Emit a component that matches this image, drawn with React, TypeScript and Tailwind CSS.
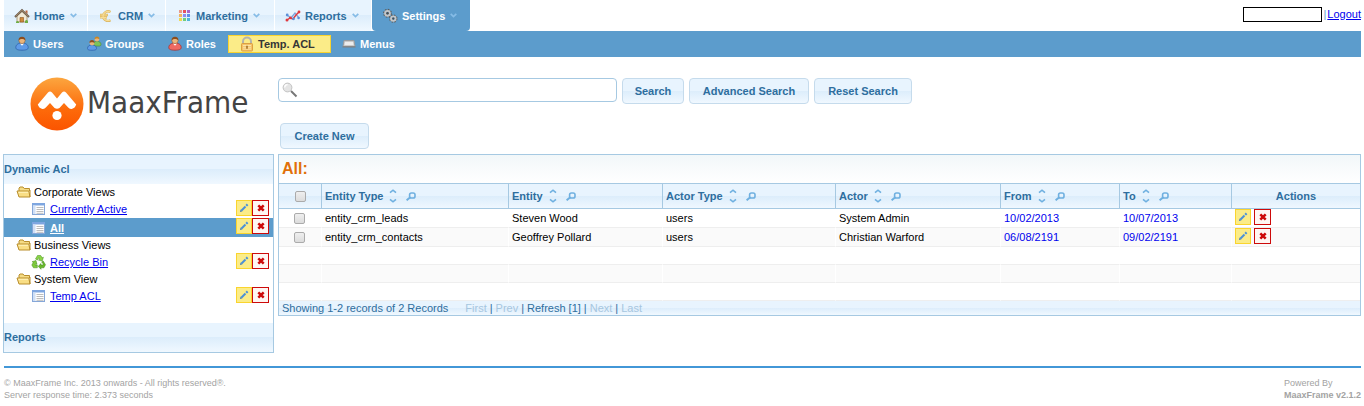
import type { ReactNode } from "react";

const GLOSS = "bg-[linear-gradient(#e8f4fe_0%,#e8f4fe_48%,#dcedfb_50%,#f0f8ff_100%)]";

function ChevronDown() {
  return (
    <svg width="7" height="5" viewBox="0 0 7 5" fill="none" stroke="#86bce6" strokeWidth="1.7" aria-hidden="true">
      <path d="M0.7 0.8 3.5 3.6 6.3 0.8" />
    </svg>
  );
}

function HomeIcon() {
  return (
    <svg width="16" height="16" viewBox="0 0 16 16" aria-hidden="true">
      <path d="M3 8 8 3.5 13 8v6H3z" fill="#f1ead8" stroke="#a08a66" strokeWidth=".8" />
      <path d="M1 9 8 2.2 15 9" fill="none" stroke="#6b5b4b" strokeWidth="2" />
      <path d="M1.6 8.4 8 2.2l6.4 6.2" fill="none" stroke="#b99a73" strokeWidth=".7" />
      <path d="M11.5 2.5h2v3.6l-2-2z" fill="#b8643c" />
      <path d="M6 14V9.5h3.5V14z" fill="#d08a3a" stroke="#8a5524" strokeWidth=".6" />
      <path d="M2 14.5c0-2 2-2 3-.8V15H2zM11 13c1-1.5 3-1 3 .8V15h-3z" fill="#6fae45" />
    </svg>
  );
}

function EuroIcon() {
  return (
    <svg width="16" height="16" viewBox="0 0 16 16" fill="none" aria-hidden="true">
      <path d="M12.5 4A5 5 0 0 0 5 8a5 5 0 0 0 7.5 4.2M2 7h8M2 9.4h7" stroke="#dcb661" strokeWidth="2.3" />
      <path d="M12.3 4A5 5 0 0 0 5 8a5 5 0 0 0 7.3 4M2.3 7h7.2M2.3 9.4h6.3" stroke="#f7dd96" strokeWidth="1.1" />
    </svg>
  );
}

function SwatchIcon() {
  const colors = ["#e99a8a", "#e8505b", "#a865c9", "#f3b35f", "#8d8df0", "#5f8de9", "#f0da52", "#6fcf7d", "#4fb6d8"];
  return (
    <svg width="16" height="16" viewBox="0 0 16 16" aria-hidden="true">
      {colors.map((c, i) => (
        <rect key={c} x={3 + (i % 3) * 4} y={2 + Math.floor(i / 3) * 4} width="3" height="3" fill={c} />
      ))}
    </svg>
  );
}

function ChartIcon() {
  return (
    <svg width="16" height="16" viewBox="0 0 16 16" fill="none" aria-hidden="true">
      <path d="M2 7l4 3 4-5 4 5" stroke="#7ba7e0" strokeWidth="1.3" />
      <path d="M2 12l3-2 3 1 3-4 3-3" stroke="#e0393e" strokeWidth="1.4" />
      <g fill="#e0393e">
        <circle cx="2" cy="12" r="1.5" /><circle cx="5.3" cy="9.8" r="1.4" /><circle cx="14" cy="4" r="1.4" />
      </g>
      <g fill="#5b8fd8">
        <circle cx="2.2" cy="7" r="1.4" /><circle cx="8.5" cy="10.8" r="1.4" /><circle cx="13.6" cy="10" r="1.3" />
      </g>
    </svg>
  );
}

function GearsIcon() {
  return (
    <svg width="16" height="16" viewBox="0 0 16 16" fill="none" aria-hidden="true">
      <circle cx="5.5" cy="5.3" r="3.6" stroke="#5d5d5d" strokeWidth="1.7" strokeDasharray="1.6 1.2" />
      <circle cx="5.5" cy="5.3" r="2.4" stroke="#c6c6c6" strokeWidth="1.9" />
      <circle cx="5.5" cy="5.3" r="1.2" fill="#4c4c4c" />
      <circle cx="11.3" cy="10.6" r="3.4" stroke="#5d5d5d" strokeWidth="1.6" strokeDasharray="1.5 1.2" />
      <circle cx="11.3" cy="10.6" r="2.3" stroke="#c6c6c6" strokeWidth="1.8" />
      <circle cx="11.3" cy="10.6" r="1.1" fill="#4c4c4c" />
    </svg>
  );
}

function PersonIcon({ color, edge }: { color: string; edge: string }) {
  return (
    <svg width="16" height="16" viewBox="0 0 16 16" aria-hidden="true">
      <path d="M1.8 11.6c0-3 2.6-4.6 6.200-4.600s6.200 1.600 6.200 4.600c0 2-2.600 2.600-6.200 2.600S1.800 13.600 1.800 11.600z" fill={color} stroke={edge} strokeWidth=".8" />
      <path d="M6 7.500l2 2.200 2-2.200z" fill="#fff" />
      <circle cx="8" cy="4.500" r="3.100" fill="#eab57c" stroke="#8a5524" strokeWidth=".5" />
      <path d="M4.700 4.500C4.300 2 6 .8 8 .8S11.700 2 11.300 4.500C10.500 3.300 9 3.100 8 3.100S5.500 3.300 4.700 4.500z" fill="#8b4d1e" />
    </svg>
  );
}

function GroupIcon() {
  return (
    <svg width="16" height="16" viewBox="0 0 16 16" aria-hidden="true">
      <path d="M7 8.500c0-2 1.500-3.200 4-3.200s4 1.200 4 3.200-2 1.500-4 1.500S7 10.500 7 8.500z" fill="#7cc35a" stroke="#4a8a33" strokeWidth=".6" />
      <circle cx="11" cy="3.300" r="2.200" fill="#eab57c" />
      <path d="M8.700 3.300C8.400 1.500 9.700.5 11 .5s2.700 1 2.300 2.800C12.500 2.300 9.500 2.300 8.700 3.300z" fill="#c98522" />
      <path d="M1.500 12.500c0-2.300 1.800-3.600 4.500-3.600s4.500 1.300 4.500 3.600c0 1.500-2 1.800-4.500 1.800S1.500 14 1.500 12.500z" fill="#5e9be8" stroke="#2d5fa8" strokeWidth=".7" />
      <circle cx="6" cy="7" r="2.400" fill="#eab57c" />
      <path d="M3.500 7C3.200 5.200 4.500 4 6 4s2.800 1.200 2.500 3C7.700 5.900 4.300 5.900 3.500 7z" fill="#8b4d1e" />
    </svg>
  );
}

function LockIcon() {
  return (
    <svg width="16" height="16" viewBox="0 0 16 16" aria-hidden="true">
      <path d="M4 8V5.500a4 4 0 0 1 8 0V8" fill="none" stroke="#b4b4ac" strokeWidth="2" />
      <rect x="2.500" y="7.500" width="11" height="7.500" rx=".8" fill="#f6c466" stroke="#d99a3c" strokeWidth=".9" />
      <path d="M4 9.500h8M4 11.300h8M4 13.100h8" stroke="#fdebb8" strokeWidth=".8" />
      <path d="M7.300 9.800h1.400v3H7.300z" fill="#9a6418" />
    </svg>
  );
}

function MenuIcon() {
  return (
    <svg width="16" height="16" viewBox="0 0 16 16" aria-hidden="true">
      <path d="M3 4.500h10l1 6H2z" fill="#c9c9c9" stroke="#9a9a9a" strokeWidth=".9" />
      <path d="M4 6h8l.5 3h-9z" fill="#ededed" />
      <path d="M1.500 10.900h13" stroke="#7f7f7f" strokeWidth="1.200" />
    </svg>
  );
}

function FolderIcon() {
  return (
    <svg width="16" height="16" viewBox="0 0 16 16" aria-hidden="true">
      <path d="M3 12V4l1-1h3l1.200 1.500H13.500V7" fill="#f5dc86" stroke="#b98e2d" />
      <path d="M1 7h11.800l1.200 6H3z" fill="#f9de85" stroke="#b98e2d" />
      <path d="M2.500 8.300h9.700" stroke="#fff3bd" />
      <path d="M14 6v7" stroke="#b98e2d" />
    </svg>
  );
}

function ListIcon() {
  return (
    <svg width="16" height="16" viewBox="0 0 16 16" aria-hidden="true">
      <rect x="1.500" y="2.500" width="12" height="11" fill="#fff" stroke="#86a7d8" />
      <path d="M1 2h13v2.500H1z" fill="#7ea6e0" />
      <path d="M2 4.500h2.500V13H2z" fill="#cfdff5" />
      <path d="M5.500 6.500h7M5.500 8.500h7M5.500 10.500h7M5.500 12.300h7" stroke="#b4b4b4" strokeWidth=".9" />
    </svg>
  );
}

function RecycleIcon() {
  return (
    <svg width="16" height="16" viewBox="0 0 16 16" aria-hidden="true">
      <g stroke="#3e8a17" strokeWidth=".5">
        <path d="M4.500 5 6.500 1.500h3.200l1.500 2.300 1.200-.6-1.200 3.900-3.700-1 1.200-.7L7.800 3.600 6.500 6z" fill="#8ed648" />
        <path d="M12.200 7l2.300 3.800-1.600 3H10v1.500L7.200 12.300 10 9.500V11h1.800l.5-.9L10.700 8z" fill="#69b82c" />
        <path d="M6.300 13.800H2.500L.8 11l1.500-2.600-1.200-.7L5 6.500l1 3.900-1.200-.7L4 11h2.300z" fill="#7fcb3b" />
      </g>
    </svg>
  );
}

function PencilIcon() {
  return (
    <svg width="10" height="10" viewBox="0 0 10 10" aria-hidden="true">
      <path d="M1 9l.7-2.400L3.400 8.300z" fill="#2f6fb5" />
      <path d="M2.500 7.500 6.500 3.500" stroke="#4a90d9" strokeWidth="2" />
      <path d="M7.200 2.800 8.600 1.400" stroke="#4a90d9" strokeWidth="2.200" />
    </svg>
  );
}

function CrossIcon() {
  return (
    <svg width="8" height="8" viewBox="0 0 8 8" aria-hidden="true">
      <path d="M1.300 1.300l5.400 5.400M6.700 1.300 1.300 6.700" stroke="#cd0a0a" strokeWidth="2.500" />
    </svg>
  );
}

function MagnifierIcon() {
  return (
    <svg width="16" height="16" viewBox="0 0 16 16" aria-hidden="true">
      <path d="M9 9l5.500 5.500" stroke="#777" strokeWidth="1.900" />
      <circle cx="5.500" cy="5.500" r="4.400" fill="#e4e4e4" stroke="#c2c2c2" strokeWidth="1" />
      <path d="M2.700 5.500a2.900 2.900 0 0 1 2.900-2.800" stroke="#fff" strokeWidth="1.300" fill="none" />
    </svg>
  );
}

function SortIcon() {
  return (
    <svg width="8" height="14" viewBox="0 0 8 14" fill="none" stroke="#6fb0e0" strokeWidth="1.600" aria-hidden="true">
      <path d="M1 3.700 4 1.200 7 3.700M1 10.300 4 12.800 7 10.300" />
    </svg>
  );
}

function FilterIcon() {
  return (
    <svg width="10" height="9" viewBox="0 0 10 9" fill="none" stroke="#6fb0e0" strokeWidth="1.600" aria-hidden="true">
      <rect x="3.600" y="1" width="5.400" height="5" rx="1.800" />
      <path d="M4.300 5.200.6 8.200" strokeWidth="2" />
    </svg>
  );
}

function LogoMark() {
  return (
    <svg width="54" height="54" viewBox="0 0 54 54" role="img" aria-label="MaaxFrame">
      <defs>
        <linearGradient id="mark" x1="0" y1="0" x2="0" y2="1">
          <stop offset="0" stopColor="#fca63f" />
          <stop offset=".6" stopColor="#fd6a0a" />
          <stop offset="1" stopColor="#fb5400" />
        </linearGradient>
      </defs>
      <circle cx="27" cy="27" r="26.500" fill="url(#mark)" />
      <path
        d="M7.800 27.500 18 15.500q2-2 4 0l5 6 5-6q2-2 4 0l10.200 12q-1 3.500-4.500 4.500-2 0-3.500-1.500l-4.200-4.500-4.500 5q-2.500 1.500-5 0l-4.500-5-4.200 4.500q-1.500 1.500-3.500 1.500-3.500-1-4.500-4.500z"
        fill="#fff"
      />
      <circle cx="27" cy="38.500" r="4.600" fill="#fff" />
    </svg>
  );
}

const tabs: { label: string; icon: ReactNode; width: string; active?: boolean }[] = [
  { label: "Home", icon: <HomeIcon />, width: "w-[84px]" },
  { label: "CRM", icon: <EuroIcon />, width: "w-[78px]" },
  { label: "Marketing", icon: <SwatchIcon />, width: "w-[109px]" },
  { label: "Reports", icon: <ChartIcon />, width: "w-[97px]" },
  { label: "Settings", icon: <GearsIcon />, width: "w-[98px]", active: true },
];

const subItems: { label: string; icon: ReactNode; width: string; active?: boolean }[] = [
  { label: "Users", icon: <PersonIcon color="#5e9be8" edge="#2d5fa8" />, width: "w-[72px]" },
  { label: "Groups", icon: <GroupIcon />, width: "w-[81px]" },
  { label: "Roles", icon: <PersonIcon color="#ee6a62" edge="#a83030" />, width: "w-[71px]" },
  { label: "Temp. ACL", icon: <LockIcon />, width: "w-[103px]", active: true },
  { label: "Menus", icon: <MenuIcon />, width: "w-[80px]" },
];

const views: { group: string; items: { label: string; icon: ReactNode; selected?: boolean }[] }[] = [
  {
    group: "Corporate Views",
    items: [
      { label: "Currently Active", icon: <ListIcon /> },
      { label: "All", icon: <ListIcon />, selected: true },
    ],
  },
  { group: "Business Views", items: [{ label: "Recycle Bin", icon: <RecycleIcon /> }] },
  { group: "System View", items: [{ label: "Temp ACL", icon: <ListIcon /> }] },
];

const columns = ["Entity Type", "Entity", "Actor Type", "Actor", "From", "To"];

const records = [
  ["entity_crm_leads", "Steven Wood", "users", "System Admin", "10/02/2013", "10/07/2013"],
  ["entity_crm_contacts", "Geoffrey Pollard", "users", "Christian Warford", "06/08/2191", "09/02/2191"],
];

function RowActions({ name, gap }: { name: string; gap: string }) {
  return (
    <div className={`flex ${gap}`}>
      <button type="button" aria-label={`Edit ${name}`} className="flex size-4 items-center justify-center border border-[#fad42e] bg-[#fbec88]">
        <PencilIcon />
      </button>
      <button type="button" aria-label={`Delete ${name}`} className="flex h-4 w-[17px] items-center justify-center border border-[#cd0a0a] bg-[#fef6f3]">
        <CrossIcon />
      </button>
    </div>
  );
}

function GlossButton({ children, width, type = "button" }: { children: ReactNode; width: string; type?: "button" | "submit" }) {
  return (
    <button type={type} className={`${width} ${GLOSS} h-[26px] shrink-0 rounded border border-[#c5dbec] font-bold text-[#2e6e9e]`}>
      {children}
    </button>
  );
}

function Check({ label }: { label: string }) {
  return (
    <input
      type="checkbox"
      aria-label={label}
      className="block size-[11px] appearance-none rounded-xs border border-[#ababab] bg-linear-to-b from-[#efefef] to-[#dcdcdc] checked:bg-[#2e6e9e]"
    />
  );
}

function TopBar() {
  return (
    <header className="pr-[3px] pl-1">
      <div className="flex h-[31px] items-start justify-between">
        <nav className="flex" aria-label="Main">
          {tabs.map((t) => (
            <a
              key={t.label}
              href="#"
              className={`${t.width} flex h-[31px] items-center pl-2.5 font-bold whitespace-nowrap ${
                t.active ? "rounded-b bg-[#5c9ccc] text-white" : `border-r border-white text-[#2e6e9e] ${GLOSS}`
              }`}
            >
              {t.icon}
              <span className="mr-[5px] ml-1">{t.label}</span>
              <ChevronDown />
            </a>
          ))}
        </nav>
        <div className="flex items-center pt-[7px] leading-[15px]">
          <span className="h-[15px] w-[79px] border border-black" />
          <span className="px-px text-[#5c9ccc]">|</span>
          <a href="#" className="text-[#0000ee] underline">Logout</a>
        </div>
      </div>
      <nav className="flex h-[26px] items-center bg-[#5c9ccc]" aria-label="Settings">
        {subItems.map((s) => (
          <a
            key={s.label}
            href="#"
            className={`${s.width} flex h-[18px] items-center gap-[3px] pl-2.5 font-bold whitespace-nowrap ${
              s.active ? "border border-[#fad42e] bg-[#fbec88] text-[#363636]" : "text-white"
            }`}
          >
            {s.icon}
            {s.label}
          </a>
        ))}
      </nav>
    </header>
  );
}

function Sidebar() {
  return (
    <aside className="w-[271px] shrink-0">
      <div className="flex h-[97px] items-center gap-[3px] pb-1 pl-[27px]">
        <LogoMark />
        <span className="pb-1 font-['DejaVu_Sans_Condensed','DejaVu_Sans',sans-serif] text-[31px] leading-[36px] text-[#444444]">
          MaaxFrame
        </span>
      </div>
      <div className="border border-[#a6c9e2] text-black">
        <h2 className={`${GLOSS} h-[29px] leading-[29px] font-bold text-[#2e6e9e]`}>Dynamic Acl</h2>
        <ul className="pb-[18px]">
          {views.map((v) => (
            <li key={v.group}>
              <div className="flex h-4 items-center gap-0.5 pl-3 leading-[18px]">
                <FolderIcon />
                {v.group}
              </div>
              <ul>
                {v.items.map((i) => (
                  <li key={i.label} className={`flex pr-1 pl-[27px] ${i.selected ? "h-[19px] bg-[#5c9ccc]" : "h-[18px]"}`}>
                    <a href="#" className={`flex flex-1 items-center gap-[3px] underline ${i.selected ? "font-bold text-white" : "text-[#0000ee]"}`}>
                      {i.icon}
                      {i.label}
                    </a>
                    <RowActions name={i.label} gap="gap-0" />
                  </li>
                ))}
              </ul>
            </li>
          ))}
        </ul>
        <h2 className={`${GLOSS} h-[29px] leading-[29px] font-bold text-[#2e6e9e]`}>Reports</h2>
      </div>
    </aside>
  );
}

function Grid() {
  const cell = "border-r border-b border-r-white border-b-[#eeeeee] px-[3px] last:border-r-0";
  return (
    <section className="mt-[5px] border border-[#a6c9e2]">
      <h1 className="h-7 bg-linear-to-b from-[#f2f7f9] to-white pl-[3px] text-base leading-7 font-bold text-[#e17009]">All:</h1>
      <table className="w-full table-fixed border-separate border-spacing-0">
        <colgroup>
          <col className="w-[43px]" />
          <col className="w-[187px]" />
          <col className="w-[154px]" />
          <col className="w-[173px]" />
          <col className="w-[165px]" />
          <col className="w-[119px]" />
          <col className="w-[112px]" />
          <col className="w-[128px]" />
        </colgroup>
        <thead>
          <tr className={`${GLOSS} h-[26px] text-left text-[#2e6e9e]`}>
            <th className="border-y border-r border-[#a6c9e2] pl-4">
              <Check label="Select all records" />
            </th>
            {columns.map((c) => (
              <th key={c} scope="col" className="border-y border-r border-[#a6c9e2] px-[3px]">
                <div className="flex items-center">
                  {c}
                  <button type="button" aria-label={`Sort by ${c}`} className="mr-[9px] ml-[6px]"><SortIcon /></button>
                  <button type="button" aria-label={`Filter by ${c}`}><FilterIcon /></button>
                </div>
              </th>
            ))}
            <th scope="col" className="border-y border-[#a6c9e2] text-center">Actions</th>
          </tr>
        </thead>
        <tbody>
          {records.map((r) => (
            <tr key={r[0]} className="h-[19px] text-black even:bg-[#fafafa]">
              <td className={`${cell} pl-[15px]`}><Check label={`Select ${r[0]}`} /></td>
              {r.map((value, i) => (
                <td key={columns[i]} className={`${cell} ${i > 3 ? "text-[#0000ee]" : ""}`}>{value}</td>
              ))}
              <td className={`${cell} align-top`}><RowActions name={r[0]} gap="gap-[3px]" /></td>
            </tr>
          ))}
          {[0, 1, 2].map((n) => (
            <tr key={n} className="h-[18px] even:bg-[#fafafa]">
              {[0, 1, 2, 3, 4, 5, 6, 7].map((c) => (
                <td key={c} className={cell} />
              ))}
            </tr>
          ))}
        </tbody>
      </table>
      <div className={`${GLOSS} flex h-3.5 items-center pl-[3px] leading-[14px] text-[#2e6e9e]`}>
        <span className="mr-[17px]">Showing 1-2 records of 2 Records</span>
        <div className="flex gap-[3px]">
          <button type="button" disabled className="text-[#a6c6df]">First</button>|
          <button type="button" disabled className="text-[#a6c6df]">Prev</button>|
          <button type="button">Refresh [1]</button>|
          <button type="button" disabled className="text-[#a6c6df]">Next</button>|
          <button type="button" disabled className="text-[#a6c6df]">Last</button>
        </div>
      </div>
    </section>
  );
}

export default function App() {
  return (
    <div className="bg-white font-['Liberation_Sans',Arial,sans-serif] text-[11px] leading-[14px]">
      <TopBar />
      <div className="flex gap-1 px-[3px]">
        <Sidebar />
        <main className="min-w-0 flex-1 pt-[21px]">
          <form className="flex items-start gap-[5px]" onSubmit={(e) => e.preventDefault()}>
            <label className="flex h-6 w-[339px] items-center gap-1 rounded border border-[#a6c9e2] px-[3px]">
              <MagnifierIcon />
              <input type="text" aria-label="Search" className="min-w-0 flex-1 outline-none" />
            </label>
            <GlossButton type="submit" width="w-[62px]">Search</GlossButton>
            <GlossButton width="w-[120px]">Advanced Search</GlossButton>
            <GlossButton width="w-[98px]">Reset Search</GlossButton>
          </form>
          <div className="mt-[19px] flex pl-0.5">
            <GlossButton width="w-[89px]">Create New</GlossButton>
          </div>
          <Grid />
        </main>
      </div>
      <footer className="mt-[13px] mr-[3px] ml-1 flex justify-between border-t-2 border-[#4297d7] pt-[9px] text-[9px] leading-3 text-[#a3a3a3]">
        <p>
          © MaaxFrame Inc. 2013 onwards - All rights reserved®.
          <br />
          Server response time: 2.373 seconds
        </p>
        <p>
          Powered By
          <br />
          <strong>MaaxFrame v2.1.2</strong>
        </p>
      </footer>
    </div>
  );
}
